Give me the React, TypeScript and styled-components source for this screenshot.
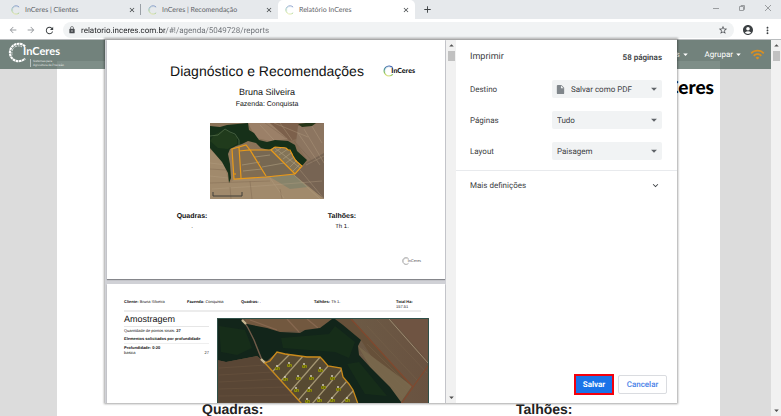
import React from 'react';
import styled, { createGlobalStyle } from 'styled-components';
import {
  MdAccountCircle,
  MdAdd,
  MdArrowBack,
  MdArrowDropDown,
  MdArrowDropUp,
  MdArrowForward,
  MdClose,
  MdExpandMore,
  MdInsertDriveFile,
  MdLock,
  MdMoreVert,
  MdRefresh,
  MdStarBorder,
  MdWifi,
} from 'react-icons/md';

const GlobalStyle = createGlobalStyle`
  *, *::before, *::after { box-sizing: border-box; }
  body { margin: 0; background: #fff; text-rendering: geometricPrecision; }
  button, input, select { font: inherit; color: inherit; text-rendering: inherit; }
  button { border: 0; padding: 0; background: none; }
  svg { display: block; flex: none; }
  h1, h2, h3, p { margin: 0; font-weight: 400; }
`;

const Browser = styled.div`
  display: flex;
  flex-direction: column;
  height: 100vh;
  overflow: hidden;
  font-family: 'Open Sans', 'Noto Sans', sans-serif;
`;

/* Tab strip */

const TabStrip = styled.div`
  display: flex;
  height: 19px;
  flex: none;
  padding-left: 4px;
  background: #e6e9ec;
`;

const Tab = styled.div<{ $active?: boolean; $divided?: boolean }>`
  display: flex;
  align-items: center;
  gap: 3px;
  flex: 0 1 137px;
  padding: 0 4px 0 7px;
  border-radius: 5px 5px 0 0;
  border-right: 1px solid ${(p) => (p.$divided ? '#9aa0a6' : 'transparent')};
  ${(p) => p.$divided && 'border-radius: 0; margin: 4px 0;'}
  background: ${(p) => (p.$active ? '#fff' : 'transparent')};
  color: #5f6368;
`;

const TabTitle = styled.button`
  display: flex;
  align-items: center;
  gap: 4px;
  flex: 1;
  min-width: 0;
  font-family: Lato, 'Open Sans', sans-serif;
  font-size: 7px;
  line-height: 10px;
  text-align: left;
  white-space: nowrap;
`;

const IconButton = styled.button<{ $tone?: string }>`
  display: flex;
  align-items: center;
  justify-content: center;
  flex: none;
  color: ${(p) => p.$tone ?? '#3c4043'};
`;

const NewTab = styled(IconButton)`
  width: 24px;
`;

const WindowControls = styled.div`
  display: flex;
  align-items: center;
  gap: 18px;
  margin-left: auto;
  padding: 0 9px 3px 0;
`;

/* Address bar */

const Toolbar = styled.div`
  display: flex;
  align-items: center;
  flex: none;
  height: 20px;
  padding: 2px 8px 0;
  gap: 8px;
  background: #fff;
`;

const Omnibox = styled.label`
  display: flex;
  align-items: center;
  gap: 5px;
  flex: 1;
  height: 16px;
  padding: 0 6px 0 5px;
  border-radius: 8px;
  background: #f1f3f4;
  color: #4a4d51;
`;

const Address = styled.input`
  flex: 1;
  min-width: 0;
  height: 14px;
  padding: 0;
  border: 0;
  outline: 0;
  font-family: Roboto, 'Open Sans', sans-serif;
  font-size: 8px;
  background: linear-gradient(90deg, #202124 84px, #6b6f74 84px);
  background-clip: text;
  -webkit-background-clip: text;
  color: transparent;
`;

/* Web page behind the dialog */

const Viewport = styled.div`
  position: relative;
  display: flex;
  flex: 1;
  min-height: 0;
  border-top: 1px solid #b9bcbe;
`;

const Site = styled.div`
  position: relative;
  display: flex;
  flex: 1;
  min-width: 0;
  padding: 21px 51px 0 57px;
  background: #dcdcdc;
`;

const SiteNav = styled.nav`
  position: absolute;
  top: 0;
  left: 0;
  right: 0;
  display: flex;
  align-items: center;
  height: 29px;
  padding: 0 6px 0 8px;
  background: rgba(59, 83, 74, 0.66);
  color: #fff;
  font-family: Roboto, Arial, sans-serif;
  font-size: 8px;
`;

const NavMenu = styled.div`
  display: flex;
  align-items: center;
  gap: 14px;
  margin: 0 6px 0 auto;
`;

const NavItem = styled.button`
  display: flex;
  align-items: center;
`;

const Sheet = styled.main`
  display: flex;
  flex-direction: column;
  justify-content: space-between;
  flex: 1;
  min-width: 0;
  background: #fff;
  font-family: 'Liberation Sans', Arial, sans-serif;
`;

const SheetBrand = styled.div`
  display: flex;
  justify-content: flex-end;
  padding: 13px 6px 0;
`;

const SheetColumns = styled.div`
  display: grid;
  grid-template-columns: 1fr 1fr;
  padding: 0 20px;
  color: #222;
  font-size: 14px;
  line-height: 14px;
  font-weight: 700;
  text-align: center;
`;

/* Brand */

const BrandRow = styled.span`
  display: flex;
  align-items: center;
`;

const BrandName = styled.span<{ $size: number; $weight?: number }>`
  margin-left: -${(p) => Math.round(p.$size / 2)}px;
  font-family: Lato, 'Open Sans', sans-serif;
  font-size: ${(p) => p.$size}px;
  line-height: 1;
  font-weight: ${(p) => p.$weight ?? 900};
`;

const NavBrand = styled.a`
  display: flex;
  align-self: flex-start;
  padding-top: 2px;
  color: #fff;
  text-decoration: none;
`;

const NavBrandText = styled.span`
  display: flex;
  flex-direction: column;
  align-items: flex-start;
  padding-top: 4px;
`;

const Slogan = styled.small`
  margin: 2px 0 0 1px;
  padding-left: 2px;
  border-left: 1px solid rgba(255, 255, 255, 0.5);
  color: rgba(255, 255, 255, 0.8);
  font-size: 3px;
  line-height: 4px;
  white-space: nowrap;
`;

type RingProps = { size: number; mono?: string; soft?: boolean };

const Ring = ({ size, mono, soft }: RingProps) => {
  const id = React.useId();
  return (
    <svg width={size} height={size} viewBox="0 0 24 24" fill="none" opacity={soft ? 0.6 : 1} aria-hidden="true">
      <defs>
        <linearGradient id={id} x1="0.7" y1="0" x2="0.4" y2="1">
          <stop offset="0" stopColor="#3d5fae" />
          <stop offset="0.45" stopColor="#4d93a0" />
          <stop offset="0.75" stopColor="#7fbf5a" />
          <stop offset="1" stopColor="#dfe27a" />
        </linearGradient>
      </defs>
      <path
        d="M19.5 5.2A10 10 0 1 0 19.5 18.8"
        stroke={mono ?? `url(#${id})`}
        strokeWidth="2.4"
        strokeDasharray={mono ? '3 0.6' : undefined}
      />
      <path
        d="M16 5.6A7.6 7.6 0 0 0 5 15"
        stroke={mono ?? '#a9c6d8'}
        strokeWidth="1"
        strokeDasharray="2 1"
      />
    </svg>
  );
};

/* Scrollbar */

const Track = styled.div`
  display: flex;
  flex-direction: column;
  align-items: center;
  flex: none;
  width: 10px;
  background: #f1f1f1;
  color: #505050;
`;

const Thumb = styled.div`
  width: 7px;
  height: 10px;
  margin-bottom: auto;
  background: #c1c1c1;
`;

const Scrollbar = () => (
  <Track aria-hidden="true">
    <MdArrowDropUp size={11} />
    <Thumb />
    <MdArrowDropDown size={11} />
  </Track>
);

/* Print dialog */

const Overlay = styled.div`
  position: absolute;
  inset: -1px 0 0 0;
  display: flex;
  padding: 0 104px 13px 105px;
`;

const Dialog = styled.section`
  display: flex;
  flex: 1;
  min-width: 0;
  background: #fff;
  border-top: 1px solid #a8a8a8;
  box-shadow: 0 0 2px 1px rgba(0, 0, 0, 0.35);
  color: #3c4043;
  font-family: Roboto, 'Open Sans', sans-serif;
  font-size: 8px;
`;

const Preview = styled.div`
  display: flex;
  flex-direction: column;
  gap: 5px;
  flex: 1;
  min-width: 0;
  padding: 0 1px 0 2px;
  overflow: hidden;
  background: #d0d1d6;
`;

const Paper = styled.article<{ $tall?: boolean }>`
  flex: none;
  height: 239px;
  padding: ${(p) => (p.$tall ? '15px 16px 0 17px' : '22px 28px 0 10px')};
  background: #fff;
  box-shadow: 0 1px 1px #85868b;
  color: #111;
  font-family: 'Liberation Sans', Arial, sans-serif;
  text-align: ${(p) => (p.$tall ? 'left' : 'center')};
`;

const Cover = styled(Paper)`
  display: flex;
  flex-direction: column;
`;

const CoverHeader = styled.header`
  display: grid;
  align-items: center;
  & > * { grid-area: 1 / 1; }
`;

const CoverTitle = styled.h1`
  font-size: 14px;
  line-height: 18px;
`;

const CoverBrand = styled.div`
  justify-self: end;
  margin-right: 2px;
`;

const ClientName = styled.p`
  margin-top: 6px;
  font-size: 9px;
  line-height: 12px;
`;

const FarmName = styled.p`
  margin-top: 1px;
  font-size: 7px;
  line-height: 12px;
`;

const CoverMap = styled.div`
  display: flex;
  justify-content: center;
  margin-top: 12px;
`;

const CoverColumns = styled.div`
  display: grid;
  grid-template-columns: 1fr 1fr;
  margin-top: 13px;
  font-size: 6px;
  line-height: 10px;
`;

const CoverHeading = styled.h2`
  font-size: 7px;
  font-weight: 700;
`;

const CoverFooter = styled.footer`
  display: flex;
  justify-content: flex-end;
  margin: auto -4px 14px 0;
  color: #555;
`;

const ReportHeader = styled.header`
  display: grid;
  grid-template-columns: 63fr 54fr 73fr 82fr 25fr;
  height: 13px;
  margin-right: 8px;
  border-bottom: 2px solid #ececec;
  font-size: 4px;
  line-height: 5px;
`;

const ReportBody = styled.div`
  display: flex;
  gap: 8px;
`;

const Summary = styled.div`
  flex: 0 1 85px;
  font-size: 4px;
  line-height: 5px;
`;

const SummaryTitle = styled.h2`
  padding: 2px 0 1px;
  border-bottom: 1px solid #e6e6e6;
  font-size: 9px;
  line-height: 11px;
`;

const SummaryLine = styled.p<{ $ruled?: boolean; $spaced?: boolean }>`
  display: flex;
  justify-content: space-between;
  padding: ${(p) => (p.$ruled || p.$spaced ? '1px 0 2px' : '0')};
  border-bottom: ${(p) => (p.$ruled ? '1px solid #efefef' : '0')};
  margin-bottom: ${(p) => (p.$ruled ? '1px' : '0')};
`;

const ReportMap = styled.div`
  flex: 1;
  min-width: 0;
  margin-top: 6px;
`;

const Settings = styled.form`
  display: flex;
  flex-direction: column;
  flex: 0 0 221px;
`;

const SettingsHead = styled.header`
  display: flex;
  align-items: center;
  justify-content: space-between;
  height: 34px;
  padding: 0 15px 0 14px;
  font-weight: 600;
`;

const SettingsTitle = styled.h2`
  font-size: 9px;
`;

const Field = styled.label`
  display: flex;
  align-items: center;
  justify-content: space-between;
  height: 31px;
  padding: 4px 15px 5px 14px;
`;

const SelectBox = styled.span`
  display: flex;
  align-items: center;
  width: 110px;
  height: 18px;
  padding: 0 1px 0 3px;
  border-radius: 2px;
  background: #f1f3f4;
  color: #5f6368;
`;

const Select = styled.select<{ $inset?: boolean }>`
  appearance: none;
  flex: 1;
  min-width: 0;
  height: 16px;
  padding: 0 0 0 ${(p) => (p.$inset ? '5px' : '2px')};
  border: 0;
  background: transparent;
  color: #3c4043;
`;

const MoreSettings = styled.button`
  display: flex;
  align-items: center;
  justify-content: space-between;
  height: 30px;
  margin-top: 3px;
  padding: 0 16px 0 14px;
  border-top: 1px solid #e8eaed;
`;

const Actions = styled.footer`
  display: flex;
  align-items: center;
  justify-content: flex-end;
  gap: 4px;
  margin-top: auto;
  padding: 0 10px 8px;
`;

const ActionButton = styled.button<{ $primary?: boolean }>`
  width: ${(p) => (p.$primary ? '40px' : '49px')};
  height: ${(p) => (p.$primary ? '21px' : '19px')};
  border: ${(p) => (p.$primary ? '2px solid #f4000c' : '1px solid #dadce0')};
  border-radius: ${(p) => (p.$primary ? '0' : '2px')};
  background: ${(p) => (p.$primary ? '#1a73e8' : '#fff')};
  color: ${(p) => (p.$primary ? '#fff' : '#4a82e8')};
  font-weight: ${(p) => (p.$primary ? 700 : 500)};
`;

/* Satellite drawings */

const FarmMap = () => (
  <svg width="114" height="76" viewBox="0 0 114 76" role="img" aria-label="Mapa da fazenda">
    <defs>
      <linearGradient id="farm-soil" x1="0" y1="1" x2="1" y2="0">
        <stop offset="0" stopColor="#a08668" />
        <stop offset="0.5" stopColor="#8b7459" />
        <stop offset="1" stopColor="#806652" />
      </linearGradient>
    </defs>
    <rect width="114" height="76" fill="url(#farm-soil)" />
    <path d="M38 0H60L80 16 60 18 46 15Z" fill="#9b8068" />
    <path d="M60 0H88L98 12 80 18Z" fill="#7c604b" />
    <path d="M88 3L114 0V34L98 38 86 20Z" fill="#8c7560" />
    <path d="M96 40L114 30V76L84 52Z" fill="#776453" />
    <path d="M0 26L14 40 19 60 25 56 84 52 114 76H0Z" fill="#a18a6c" />
    <path d="M60 54L84 52 98 64 80 66Z" fill="#87836a" />
    <g stroke="#b7a184" strokeWidth="0.6" opacity="0.6">
      <path d="M0 40L16 42M0 53L18 55M2 66L50 63M50 63L112 58M60 55L74 75M84 52L110 76M50 2L64 17M70 0L82 17M96 42L114 33M90 47L114 76" />
      <path d="M64 0L98 14M100 0L112 20M88 10L110 42M94 6L114 40" />
    </g>
    <g stroke="#6f5945" strokeWidth="0.5" opacity="0.6">
      <path d="M0 46L16 47M20 64L21 76M40 58L42 76M70 66L72 76M0 60L60 58M84 18L104 40M55 0L76 15" />
    </g>
    <path
      d="M0 3L10 4 17 2 38 0 39 7 44 10 49 17 57 19 65 17 78 18 85 22 87 28 97 37 92 43 86 38 80 28 74 24 64 24 59 27 51 25 46 20 38 18 32 21 26 23 20 26 18 31 20 41 21 55 19 60 18 50 12 39 6 32 0 25Z"
      fill="#163019"
    />
    <path d="M4 12L15 6 27 14 27 21 18 26 8 25 0 18Z" fill="#203b1c" />
    <path d="M0 13L8 12 15 6 20 9 25 11 29 17V22" fill="none" stroke="#56704d" strokeWidth="0.7" />
    <path d="M88 1L96 0H106L102 3 92 4Z" fill="#263518" />
    <path d="M22 26L36 22 40 27H61L85 51 24 56Z" fill="#816d52" />
    <path d="M40 28L61 27 85 51 56 53Z" fill="#776852" />
    <path d="M61 27L65 24 76 25 82 30 84 35 92 43 85 51Z" fill="#837458" />
    <path
      d="M65 25L90 45M65 29L71 25M69 32L78 26M73 36L81 30M76 40L84 34M80 44L87 37M83 48L90 41M32 42L50 39M33 48L52 46M45 34L60 32M52 44L74 40"
      stroke="#b3a384"
      strokeWidth="0.8"
      opacity="0.7"
    />
    <path
      d="M22 26L36 22 40 27H61L65 24 76 25 78 27H80L83 33 86 38 92 43 85 51 56 54 24 56ZM29 24L31 55M29 28L40 27L56 53M61 27L85 51"
      fill="none"
      stroke="#e99a18"
      strokeWidth="1.2"
    />
    <circle cx="25" cy="51" r="1" fill="#d88c14" />
    <path d="M3 69V73H32V69" fill="none" stroke="#403e38" />
  </svg>
);

const MARKERS: Array<[number, number]> = [
  [60, 50], [72, 47], [68, 61], [81, 60], [79, 72], [87, 48], [103, 52],
  [94, 60], [115, 60], [106, 69], [121, 71], [92, 72], [90, 83], [102, 82],
  [115, 82], [130, 82],
];

const FIELD = 'M48 45L53 43 60 34 68 36 83 38 90 39 103 39 106 42 111 48 124 50 126 59 132 66 136 72 141 86H85Z';

const SamplingMap = () => (
  <svg width="100%" viewBox="0 0 212 120" role="img" aria-label="Mapa de amostragem">
    <defs>
      <clipPath id="sampling-field"><path d={FIELD} /></clipPath>
      <linearGradient id="sampling-soil">
        <stop offset="0" stopColor="#5f4b39" />
        <stop offset="0.6" stopColor="#6d5b46" />
        <stop offset="1" stopColor="#695240" />
      </linearGradient>
    </defs>
    <rect width="212" height="120" fill="url(#sampling-soil)" />
    <path d="M28 1H115L103 10 88 12 62 14 30 6Z" fill="#72583f" />
    <path d="M118 1H135L195 68 184 84 144 22Z" fill="#665039" />
    <path d="M141 28L195 68 184 84 153 49Z" fill="#77664b" />
    <path d="M173 0L212 44V0Z" fill="#6f5442" />
    <g stroke="#7e6a50" strokeWidth="0.5" opacity="0.6">
      <path d="M0 50L46 46M0 56L52 52M0 64L60 60M0 71L66 68M0 78L74 76M146 30L190 73M144 36L186 78M150 26L194 70M150 8L200 62M160 2L210 55M142 40L180 80" />
    </g>
    <path d="M70 1L82 14M90 1L101 10M33 2L60 12" stroke="#94725a" strokeWidth="1.2" opacity="0.6" />
    <path
      d="M0 1H24L30 6 50 10 63 14 83 15 88 12 103 10 115 1H118L126 7 144 22 141 28 142 37 153 49 173 69 184 84V120H141L140 84 136 72 126 59 124 50 111 48 103 39 83 38 60 34 50 43 45 42 40 38 9 44 0 42Z"
      fill="#12251a"
    />
    <path d="M2 8L28 12 35 30 20 37 4 34ZM64 20L112 16 118 8 138 24 132 40 118 34 66 30ZM130 46L142 44 170 78 148 76Z" fill="#183019" opacity="0.7" />
    <path d="M0 84L84 84 48 45 40 38 9 44 0 42Z" fill="#594635" />
    <g stroke="#786048" strokeWidth="0.5" opacity="0.6">
      <path d="M2 50L49 47M2 57L56 54M2 64L63 61M2 71L69 69M2 78L76 77" />
    </g>
    <path d="M26 2L31 10 37 22 45 42 83 84" fill="none" stroke="#705b49" strokeWidth="1.4" />
    <path d="M25 2L29 6M44 41L48 45" stroke="#c6b690" strokeWidth="2.4" />
    <path d={FIELD} fill="#574a32" />
    <g clipPath="url(#sampling-field)" stroke="#a39572" strokeWidth="1.3">
      <path d="M73 36L48 61M87 37L55 73M104 38L64 84M112 47L78 86M125 51L95 86M130 63L108 88M137 72L120 90" />
    </g>
    <path d={FIELD} fill="none" stroke="#c98a1a" strokeWidth="1.3" />
    <path d="M134 1L196 69 184 86M211 48L196 69" fill="none" stroke="#81492f" strokeWidth="1.2" />
    <path d="M172 1L211 45" stroke="#a8977b" strokeWidth="0.8" />
    {MARKERS.map(([x, y]) => (
      <g key={`${x}-${y}`}>
        <rect x={x - 2} y={y - 1} width="5" height="3" rx="1" fill="#8e8c0c" />
        <path d={`M${x - 1} ${y}h1M${x + 1} ${y + 1}h1`} stroke="#26260a" strokeWidth="0.7" />
        <circle cx={x} cy={y - 2} r="1" fill="#cfcbb8" />
      </g>
    ))}
    <path d="M0.5 120V0.5H211.5V120" fill="none" stroke="#2f5049" />
  </svg>
);

/* Page */

const TABS = [
  { title: 'InCeres | Clientes', divided: true },
  { title: 'InCeres | Recomendação' },
  { title: 'Relatório InCeres', active: true },
];

type OptionFieldProps = { label: string; value: string; icon?: React.ReactNode };

const OptionField = ({ label, value, icon }: OptionFieldProps) => (
  <Field>
    {label}
    <SelectBox>
      {icon}
      <Select $inset={Boolean(icon)} defaultValue={value}>
        <option>{value}</option>
      </Select>
      <MdArrowDropDown size={14} />
    </SelectBox>
  </Field>
);

export default function App() {
  return (
    <Browser>
      <GlobalStyle />
      <TabStrip>
        {TABS.map((tab) => (
          <Tab key={tab.title} $active={tab.active} $divided={tab.divided}>
            <TabTitle type="button">
              <Ring size={10} soft />
              {tab.title}
            </TabTitle>
            <IconButton type="button" aria-label="Fechar guia"><MdClose size={8} /></IconButton>
          </Tab>
        ))}
        <NewTab type="button" aria-label="Nova guia"><MdAdd size={11} /></NewTab>
        <WindowControls>
          <IconButton type="button" aria-label="Minimizar" $tone="#9a9da0">
            <svg width="8" height="8" viewBox="0 0 8 8"><path d="M1 4.5H7" stroke="currentColor" /></svg>
          </IconButton>
          <IconButton type="button" aria-label="Restaurar" $tone="#9a9da0">
            <svg width="8" height="8" viewBox="0 0 8 8" fill="none" stroke="currentColor">
              <path d="M1.5 2.5H5.5V6.5H1.5ZM3 2.5V1.5H6.5V5.5H5.5" />
            </svg>
          </IconButton>
          <IconButton type="button" aria-label="Fechar" $tone="#9a9da0">
            <svg width="8" height="8" viewBox="0 0 8 8"><path d="M1 1L7 7M7 1L1 7" stroke="currentColor" /></svg>
          </IconButton>
        </WindowControls>
      </TabStrip>

      <Toolbar>
        <IconButton type="button" aria-label="Voltar" $tone="#9a9da1"><MdArrowBack size={10} /></IconButton>
        <IconButton type="button" aria-label="Avançar" $tone="#9a9da1"><MdArrowForward size={10} /></IconButton>
        <IconButton type="button" aria-label="Recarregar"><MdRefresh size={11} /></IconButton>
        <Omnibox>
          <MdLock size={8} />
          <Address
            aria-label="Endereço"
            defaultValue="relatorio.inceres.com.br/#!/agenda/5049728/reports"
          />
          <MdStarBorder size={10} />
        </Omnibox>
        <IconButton type="button" aria-label="Perfil"><MdAccountCircle size={12} /></IconButton>
        <IconButton type="button" aria-label="Menu"><MdMoreVert size={11} /></IconButton>
      </Toolbar>

      <Viewport>
        <Site>
          <Sheet>
            <SheetBrand>
              <BrandRow>
                <Ring size={26} />
                <BrandName $size={19}>InCeres</BrandName>
              </BrandRow>
            </SheetBrand>
            <SheetColumns>
              <span>Quadras:</span>
              <span>Talhões:</span>
            </SheetColumns>
          </Sheet>
          <SiteNav>
            <NavBrand href="#inicio">
              <Ring size={21} mono="#fff" />
              <NavBrandText>
                <BrandName $size={11} $weight={700}>InCeres</BrandName>
                <Slogan>
                  Sistemas para
                  <br />
                  Agricultura de Precisão
                </Slogan>
              </NavBrandText>
            </NavBrand>
            <NavMenu>
              <NavItem type="button">s <MdArrowDropDown size={11} /></NavItem>
              <NavItem type="button">Agrupar <MdArrowDropDown size={11} /></NavItem>
            </NavMenu>
            <IconButton type="button" aria-label="Conexão" $tone="#d98f22">
              <MdWifi size={15} />
            </IconButton>
          </SiteNav>
        </Site>
        <Scrollbar />

        <Overlay>
          <Dialog role="dialog" aria-label="Imprimir">
            <Preview>
              <Cover>
                <CoverHeader>
                  <CoverTitle>Diagnóstico e Recomendações</CoverTitle>
                  <CoverBrand>
                    <BrandRow>
                      <Ring size={12} />
                      <BrandName $size={7}>InCeres</BrandName>
                    </BrandRow>
                  </CoverBrand>
                </CoverHeader>
                <ClientName>Bruna Silveira</ClientName>
                <FarmName>Fazenda: Conquista</FarmName>
                <CoverMap><FarmMap /></CoverMap>
                <CoverColumns>
                  <div>
                    <CoverHeading>Quadras:</CoverHeading>
                    <p>.</p>
                  </div>
                  <div>
                    <CoverHeading>Talhões:</CoverHeading>
                    <p>Th 1.</p>
                  </div>
                </CoverColumns>
                <CoverFooter>
                  <BrandRow>
                    <Ring size={8} mono="#777" />
                    <BrandName $size={4} $weight={400}>InCeres</BrandName>
                  </BrandRow>
                </CoverFooter>
              </Cover>

              <Paper $tall>
                <ReportHeader>
                  <span><b>Cliente:</b> Bruna Silveira</span>
                  <span><b>Fazenda:</b> Conquista</span>
                  <span><b>Quadras:</b> .</span>
                  <span><b>Talhões:</b> Th 1.</span>
                  <span><b>Total Ha:</b><br />157.51</span>
                </ReportHeader>
                <ReportBody>
                  <Summary>
                    <SummaryTitle>Amostragem</SummaryTitle>
                    <SummaryLine $spaced><span>Quantidade de pontos totais: <b>27</b></span></SummaryLine>
                    <SummaryLine $ruled><b>Elementos solicitados por profundidade</b></SummaryLine>
                    <SummaryLine><b>Profundidade: 0-20</b></SummaryLine>
                    <SummaryLine><span>basica</span><span>27</span></SummaryLine>
                  </Summary>
                  <ReportMap><SamplingMap /></ReportMap>
                </ReportBody>
              </Paper>
            </Preview>
            <Scrollbar />

            <Settings onSubmit={(e) => e.preventDefault()}>
              <SettingsHead>
                <SettingsTitle>Imprimir</SettingsTitle>
                <span>58 páginas</span>
              </SettingsHead>
              <OptionField label="Destino" value="Salvar como PDF" icon={<MdInsertDriveFile size={11} color="#80868b" />} />
              <OptionField label="Páginas" value="Tudo" />
              <OptionField label="Layout" value="Paisagem" />
              <MoreSettings type="button">
                Mais definições
                <MdExpandMore size={11} />
              </MoreSettings>
              <Actions>
                <ActionButton type="submit" $primary>Salvar</ActionButton>
                <ActionButton type="button">Cancelar</ActionButton>
              </Actions>
            </Settings>
          </Dialog>
        </Overlay>
      </Viewport>
    </Browser>
  );
}
